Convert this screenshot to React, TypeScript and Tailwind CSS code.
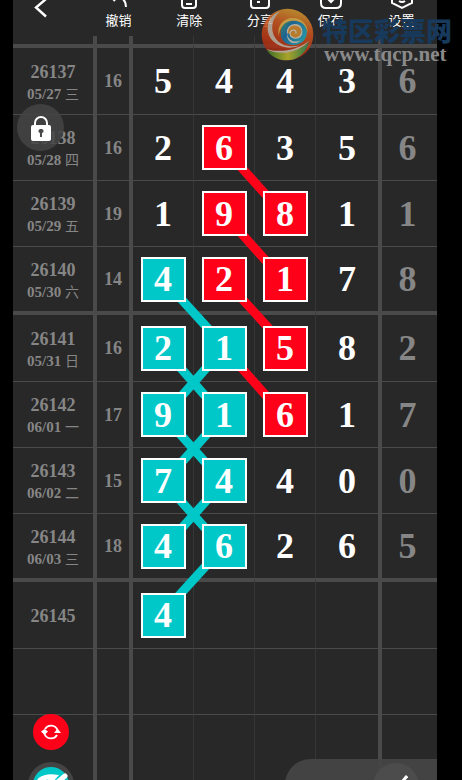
import React from 'react';

type Mark = 'red' | 'teal';
type Link = 'left' | 'right';

interface Cell {
    digit: string;
    mark?: Mark;
    links?: { to: Link; color: Mark }[];
}

interface Draw {
    issue: string;
    date?: string;
    weekday?: string;
    sum?: string;
    cells: Cell[];
    last?: string;
}

const plain = (digit: string): Cell => ({ digit });
const boxed = (digit: string, mark: Mark, ...to: Link[]): Cell => ({
    digit,
    mark,
    links: to.map((t) => ({ to: t, color: mark })),
});

const DRAWS: Draw[] = [
    { issue: '26137', date: '05/27', weekday: '三', sum: '16', cells: [plain('5'), plain('4'), plain('4'), plain('3')], last: '6' },
    { issue: '26138', date: '05/28', weekday: '四', sum: '16', cells: [plain('2'), boxed('6', 'red', 'right'), plain('3'), plain('5')], last: '6' },
    { issue: '26139', date: '05/29', weekday: '五', sum: '19', cells: [plain('1'), boxed('9', 'red', 'right'), boxed('8', 'red'), plain('1')], last: '1' },
    {
        issue: '26140',
        date: '05/30',
        weekday: '六',
        sum: '14',
        cells: [boxed('4', 'teal', 'right'), boxed('2', 'red', 'right'), boxed('1', 'red'), plain('7')],
        last: '8',
    },
    {
        issue: '26141',
        date: '05/31',
        weekday: '日',
        sum: '16',
        cells: [
            boxed('2', 'teal', 'right'),
            { digit: '1', mark: 'teal', links: [{ to: 'left', color: 'teal' }, { to: 'right', color: 'red' }] },
            boxed('5', 'red'),
            plain('8'),
        ],
        last: '2',
    },
    {
        issue: '26142',
        date: '06/01',
        weekday: '一',
        sum: '17',
        cells: [boxed('9', 'teal', 'right'), boxed('1', 'teal', 'left'), boxed('6', 'red'), plain('1')],
        last: '7',
    },
    {
        issue: '26143',
        date: '06/02',
        weekday: '二',
        sum: '15',
        cells: [boxed('7', 'teal', 'right'), boxed('4', 'teal', 'left'), plain('4'), plain('0')],
        last: '0',
    },
    { issue: '26144', date: '06/03', weekday: '三', sum: '18', cells: [boxed('4', 'teal'), boxed('6', 'teal', 'left'), plain('2'), plain('6')], last: '5' },
    { issue: '26145', cells: [boxed('4', 'teal'), plain(''), plain(''), plain('')] },
    { issue: '', cells: [plain(''), plain(''), plain(''), plain('')] },
    { issue: '', cells: [plain(''), plain(''), plain(''), plain('')] },
    { issue: '', cells: [plain(''), plain(''), plain(''), plain('')] },
];

const STROKES: Record<Mark, string> = { red: '#ff0019', teal: '#00c8c8' };

// Every fourth draw starts a new group with a thick rule on top
const rowHeight = (index: number) => {
    if (index % 4 === 0) return 'h-[70px]';
    return index % 4 === 3 ? 'h-[65px]' : 'h-[66px]';
};

const Connector: React.FC<{ to: Link; color: Mark }> = ({ to, color }) => (
    <svg
        className={`absolute top-1/2 z-[5] h-full w-full overflow-visible ${to === 'right' ? 'left-1/2' : 'right-1/2'}`}
        viewBox="0 0 100 100"
        preserveAspectRatio="none"
        aria-hidden="true"
    >
        <line
            x1={to === 'right' ? 0 : 100}
            y1="0"
            x2={to === 'right' ? 100 : 0}
            y2="103"
            stroke={STROKES[color]}
            strokeWidth="9"
            vectorEffect="non-scaling-stroke"
        />
    </svg>
);

const DigitCell: React.FC<{ cell: Cell; edge: string }> = ({ cell, edge }) => (
    <td className={`relative p-0 text-center text-[36px] leading-10 text-white ${edge}`}>
        {cell.links?.map((link) => <Connector key={link.to} {...link} />)}
        {cell.mark ? (
            <span
                className={`relative z-10 mx-auto flex size-[45px] items-center justify-center border-2 border-white ${
                    cell.mark === 'red' ? 'bg-[#ff0019]' : 'bg-[#00c8c8]'
                }`}
            >
                {cell.digit}
            </span>
        ) : (
            cell.digit
        )}
    </td>
);

const TrendTable: React.FC = () => (
    <table className="w-full table-fixed border-separate border-spacing-0 font-['Liberation_Serif','Noto_Sans_CJK_SC',serif] font-bold text-[#868686]">
        <colgroup>
            <col className="w-[84px]" />
            <col className="w-[36px]" />
            <col />
            <col />
            <col />
            <col className="w-[66px]" />
            <col className="w-[55px]" />
        </colgroup>
        <tbody>
            <tr className="h-2">
                <td className="border-r-4 border-[#4a4a4a] p-0" />
                <td className="border-r-4 border-[#4a4a4a] p-0" />
                <td className="border-r border-[#363636] p-0" />
                <td className="border-r border-[#363636] p-0" />
                <td className="border-r border-[#363636] p-0" />
                <td className="border-r-4 border-[#4a4a4a] p-0" />
                <td className="p-0" />
            </tr>
            {DRAWS.map((draw, index) => {
                const top = index % 4 === 0 ? 'border-t-4 border-t-[#4a4a4a]' : 'border-t border-t-[#4a4a4a]';
                return (
                    <tr key={index} className={rowHeight(index)}>
                        <td className={`border-r-4 border-r-[#4a4a4a] px-0 pt-0.5 pb-0 text-center ${top}`}>
                            <div className="text-lg leading-6">{draw.issue}</div>
                            {draw.date && (
                                <div className="text-[15px] leading-5">
                                    {draw.date} <span className="text-sm leading-5 font-normal">{draw.weekday}</span>
                                </div>
                            )}
                        </td>
                        <td className={`border-r-4 border-r-[#4a4a4a] p-0 text-center text-lg ${top}`}>{draw.sum}</td>
                        {draw.cells.map((cell, i) => (
                            <DigitCell
                                key={i}
                                cell={cell}
                                edge={`${top} ${i === 3 ? 'border-r-4 border-r-[#4a4a4a]' : 'border-r border-r-[#363636]'}`}
                            />
                        ))}
                        <td className={`py-0 pr-1 pl-0 text-center text-[36px] leading-10 ${top}`}>{draw.last}</td>
                    </tr>
                );
            })}
        </tbody>
    </table>
);

const TOOLS = [
    { label: '撤销', icon: <path d="M9 15 3 9l6-6M3 9c10 0 17 3 17 12" /> },
    { label: '清除', icon: <path d="M5 4v15q0 3 3 3h8q3 0 3-3V4M9 18h6" /> },
    { label: '分享', icon: <path d="M3 4v15q0 3 3 3h12q3 0 3-3V4M9 16h3" /> },
    { label: '保存', icon: <path d="M2 4v13q0 5 5 5h10q5 0 5-5V4M9 13l3 3 3-3" /> },
    { label: '设置', icon: <path d="M12 1 22 6v11l-10 5-10-5V6ZM9 15q3 2 6 0" /> },
];

const Toolbar: React.FC = () => (
    <header className="flex h-9 items-end overflow-hidden text-white">
        <button type="button" aria-label="返回" className="flex h-9 w-[70px] shrink-0 justify-start pl-5">
            <svg className="h-[18px] w-4" viewBox="0 0 16 18" fill="none" stroke="currentColor" strokeWidth="2.4">
                <path d="M13 -1 3 7.500 13 16.500" />
            </svg>
        </button>
        <nav className="flex flex-1 items-end">
            {TOOLS.map((tool) => (
                <button key={tool.label} type="button" className="flex flex-1 flex-col items-center pb-1.5 text-[13px] leading-5">
                    <svg className="size-6" viewBox="0 0 24 24" fill="none" stroke="currentColor" strokeWidth="2" aria-hidden="true">
                        {tool.icon}
                    </svg>
                    {tool.label}
                </button>
            ))}
        </nav>
    </header>
);

const Watermark: React.FC = () => (
    <div className="pointer-events-none absolute top-2 right-2.5 z-20 flex items-start gap-2">
        <svg className="size-[53px] opacity-85" viewBox="5 14 158 158" aria-hidden="true">
            <defs>
                <linearGradient id="ball" x1="0.6" y1="0" x2="0.3" y2="1">
                    <stop offset="0" stopColor="#d09a30" />
                    <stop offset="0.3" stopColor="#cc5a20" />
                    <stop offset="0.7" stopColor="#b83414" />
                    <stop offset="1" stopColor="#8c2412" />
                </linearGradient>
                <linearGradient id="sea" x1="0" y1="0" x2="1" y2="0.6">
                    <stop offset="0" stopColor="#3c9a6c" />
                    <stop offset="0.4" stopColor="#1c6ea4" />
                    <stop offset="1" stopColor="#26a8b8" />
                </linearGradient>
                <linearGradient id="leaf" x1="0" y1="0" x2="1" y2="0">
                    <stop offset="0" stopColor="#3c7c2c" />
                    <stop offset="0.5" stopColor="#c0b828" />
                    <stop offset="1" stopColor="#2c8454" />
                </linearGradient>
            </defs>
            <circle cx="84" cy="93" r="77" fill="url(#ball)" />
            {/* pale sweep on the left */}
            <path d="M62 24C22 38 14 84 40 112c20 20 50 26 80 14-34 6-58-2-72-22C32 80 36 46 62 24Z" fill="#c4b4a4" />
            {/* green and yellow foot */}
            <path d="M22 139c34 12 92 10 126-24-8 34-36 55-66 55-26 0-48-12-60-31Z" fill="url(#leaf)" />
            <path d="M20 136c38 12 94 6 130-26-32 38-88 48-130 26Z" fill="#c8bca8" />
            {/* blue swirl with a pale rim */}
            <path d="M64 92c-2-26 14-44 38-44 26 0 42 20 40 40-2 24-22 38-42 36-20 0-36-14-36-32Z" fill="url(#sea)" />
            <path d="M58 98c-6-30 12-54 42-54 28 0 46 22 44 46-2-22-18-38-42-38-26 0-42 20-44 46Z" fill="#dcae48" />
            <path d="M84 90c-2-16 8-26 22-26 16 0 24 14 20 26-4 14-22 18-32 8-6-8-2-18 8-18 6 0 10 6 6 10" fill="#d08a2c" stroke="#d0c8b8" strokeWidth="4" />
            <path d="M84 90c0 20 20 30 40 20-18 18-46 6-40-20Z" fill="#d0c8b8" />
        </svg>
        <div className="pt-1.5">
            <div className="font-['Noto_Sans_CJK_SC',sans-serif] text-[26px] leading-8 font-black text-[#17395c]">特区彩票网</div>
            <div className="pl-0.5 font-['Liberation_Serif',serif] text-[21px] leading-4 font-bold text-[#8a8a8a]">www.tqcp.net</div>
        </div>
    </div>
);

export default function App() {
    return (
        <div className="relative h-screen overflow-hidden bg-black pr-[25px] pl-[13px] font-['Noto_Sans_CJK_SC',sans-serif]">
            <main className="relative h-full overflow-hidden bg-[#282828]">
                <Toolbar />
                <TrendTable />

                <button
                    type="button"
                    aria-label="锁定"
                    className="absolute top-[104px] left-1 z-20 flex size-[47px] items-center justify-center rounded-full bg-[#444444]/85 text-white"
                >
                    <svg className="h-[26px] w-5" viewBox="0 0 20 26" aria-hidden="true">
                        <path d="M4 11V8a6 6 0 0 1 12 0v3" fill="none" stroke="currentColor" strokeWidth="2" />
                        <rect x="0" y="10" width="20" height="16" rx="2" fill="currentColor" />
                        <path d="M10 14a2 2 0 0 1 1 4v4H9v-4a2 2 0 0 1 1-4Z" fill="#484848" />
                    </svg>
                </button>

                <div className="absolute bottom-[-28px] left-[15px] z-20 flex flex-col items-center gap-3">
                    <button type="button" aria-label="刷新" className="flex size-9 items-center justify-center rounded-full bg-[#ff0019] text-white">
                        <svg className="size-5" viewBox="0 0 20 20" fill="none" stroke="currentColor" strokeWidth="1.8" aria-hidden="true">
                            <path d="M4 7a7 7 0 0 1 12.500 1M16 13A7 7 0 0 1 3.500 12" />
                            <path d="M0 9.500 3.500 7 7 9.500 3.500 13ZM13 11l3.500-4.500L20 11Z" fill="currentColor" stroke="none" />
                        </svg>
                    </button>
                    <button type="button" aria-label="画笔" className="flex size-[46px] items-center justify-center rounded-full bg-[#444444]">
                        <svg className="size-9" viewBox="0 0 36 36" aria-hidden="true">
                            <circle cx="18" cy="18" r="18" fill="#00c8c8" />
                            <path d="M7 13q6-4 14-3l-8 9q7-1 13-5l6-5" fill="none" stroke="#fff" strokeWidth="5" strokeLinecap="round" />
                        </svg>
                    </button>
                </div>

                <div className="absolute right-0 bottom-[-30px] z-20 flex h-[51px] w-[152px] items-start justify-end rounded-l-full bg-[#444444]/95 pt-1 pr-[18px] text-[#c8c8c8]">
                    <span className="pt-3.5 text-sm leading-5">设置</span>
                    <span className="mt-[18px] mr-1 ml-5 h-3 w-0.5 bg-[#a0a0a0]" />
                    <button type="button" aria-label="编辑" className="flex size-[46px] items-center justify-center rounded-full bg-[#4c4c4c] text-white">
                        <svg className="size-6" viewBox="0 0 24 24" fill="none" stroke="currentColor" strokeWidth="3" aria-hidden="true">
                            <path d="M23 2 8 20" />
                        </svg>
                    </button>
                </div>
            </main>
            <Watermark />
        </div>
    );
}
